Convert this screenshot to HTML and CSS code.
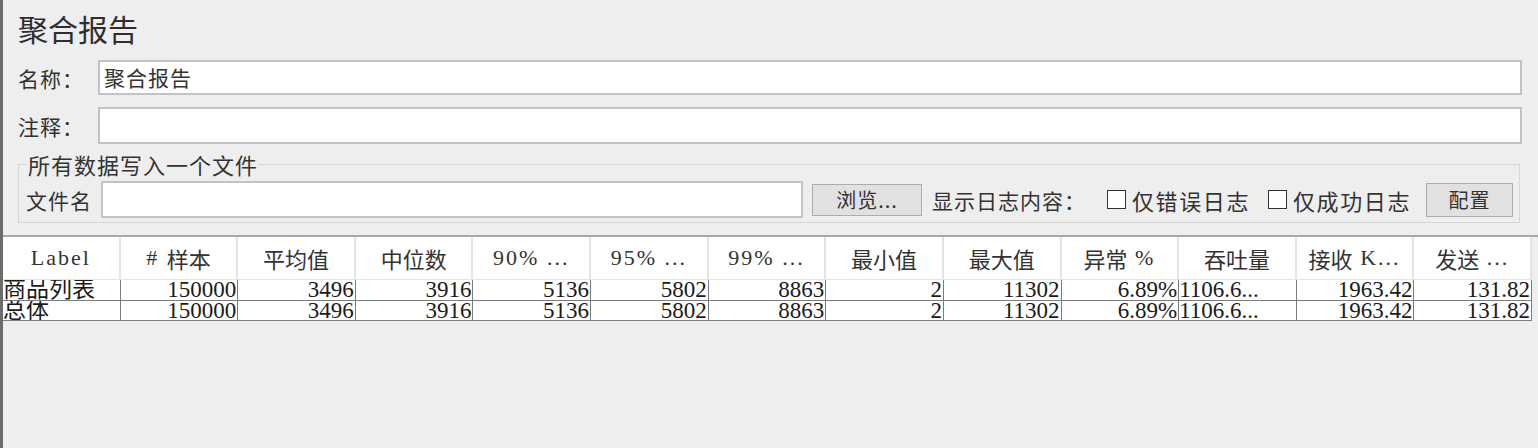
FILE: index.html
```html
<!DOCTYPE html>
<html lang="zh-CN">
<head>
<meta charset="utf-8">
<title>聚合报告</title>
<link rel="stylesheet" href="styles.css">
</head>
<body>
<div class="page">
  <div class="panel">
    <div class="title">聚合报告</div>
    <div class="field-row name-row">
      <span class="lbl">名称：</span>
      <div class="input">聚合报告</div>
    </div>
    <div class="field-row comment-row">
      <span class="lbl">注释：</span>
      <div class="input"></div>
    </div>
    <fieldset class="group">
      <legend>所有数据写入一个文件</legend>
      <div class="file-row">
        <span class="file-lbl">文件名</span>
        <div class="input file-input"></div>
        <button class="btn browse">浏览...</button>
        <span class="log-lbl">显示日志内容：</span>
        <span class="chk"><span class="box"></span>仅错误日志</span>
        <span class="chk"><span class="box"></span>仅成功日志</span>
        <button class="btn cfg">配置</button>
      </div>
    </fieldset>
  </div>
  <div class="divider"></div>
  <div class="table">
    <div class="th">Label</div>
    <div class="th"># <span class="cj">样本</span></div>
    <div class="th"><span class="cj">平均值</span></div>
    <div class="th"><span class="cj">中位数</span></div>
    <div class="th">90% ...</div>
    <div class="th">95% ...</div>
    <div class="th">99% ...</div>
    <div class="th"><span class="cj">最小值</span></div>
    <div class="th"><span class="cj">最大值</span></div>
    <div class="th"><span class="cj">异常</span> %</div>
    <div class="th"><span class="cj">吞吐量</span></div>
    <div class="th"><span class="cj">接收</span> K...</div>
    <div class="th"><span class="cj">发送</span> ...</div>

    <div class="td l">商品列表</div>
    <div class="td">150000</div>
    <div class="td">3496</div>
    <div class="td">3916</div>
    <div class="td">5136</div>
    <div class="td">5802</div>
    <div class="td">8863</div>
    <div class="td">2</div>
    <div class="td">11302</div>
    <div class="td">6.89%</div>
    <div class="td l">1106.6...</div>
    <div class="td">1963.42</div>
    <div class="td">131.82</div>

    <div class="td l">总体</div>
    <div class="td">150000</div>
    <div class="td">3496</div>
    <div class="td">3916</div>
    <div class="td">5136</div>
    <div class="td">5802</div>
    <div class="td">8863</div>
    <div class="td">2</div>
    <div class="td">11302</div>
    <div class="td">6.89%</div>
    <div class="td l">1106.6...</div>
    <div class="td">1963.42</div>
    <div class="td">131.82</div>
  </div>
</div>
</body>
</html>
```
FILE: styles.css
```css
html, body {
  margin: 0;
  padding: 0;
  background: #eeeeee;
}
body {
  width: 1538px;
  height: 448px;
  overflow: hidden;
  font-family: "Noto Sans CJK SC", "Noto Sans", sans-serif;
  color: #333333;
}
.page {
  border-left: 3px solid #6c6c6c;
  height: 448px;
  box-sizing: border-box;
}
.panel {
  padding: 8px 16px 0 15px;
}
.title {
  font-size: 30px;
  line-height: 40px;
  height: 40px;
  color: #2e2e2e;
}
.field-row {
  display: flex;
  align-items: center;
}
.name-row {
  margin-top: 12px;
  height: 35px;
}
.comment-row {
  margin-top: 12px;
  height: 37px;
}
.lbl {
  width: 80px;
  font-size: 21px;
  line-height: 30px;
  letter-spacing: 1px;
}
.input {
  flex: 1;
  height: 100%;
  box-sizing: border-box;
  background: #ffffff;
  border: 2px solid #c2c2c9;
  font-size: 21px;
  line-height: 30px;
  padding-left: 4px;
  letter-spacing: 1px;
  color: #333;
}
.group {
  margin: 8px 2px 0 0;
  padding: 0 6px 4px 7px;
  border: 1px solid #d6d6d6;
  height: 71px;
  box-sizing: border-box;
  min-width: 0;
}
.group legend {
  font-size: 22px;
  line-height: 24px;
  letter-spacing: 1px;
  padding: 0 1px;
  margin-left: 1px;
  color: #333;
}
.file-row {
  display: flex;
  align-items: center;
  height: 37px;
  margin-top: 5px;
  font-size: 21px;
  letter-spacing: 1px;
}
.file-lbl {
  width: 75px;
  line-height: 30px;
}
.file-input {
  flex: none;
  width: 702px;
  height: 37px;
}
.btn {
  font-family: "Noto Sans CJK SC", sans-serif;
  font-size: 20px;
  color: #333;
  background: #e1e1e1;
  border: 1px solid #adadad;
  padding: 0;
  height: 32px;
  line-height: 28px;
  letter-spacing: 1px;
}
.browse {
  width: 110px;
  margin-left: 9px;
}
.log-lbl {
  margin-left: 10px;
  width: 175px;
  line-height: 30px;
}
.chk {
  display: flex;
  align-items: center;
  line-height: 30px;
  font-size: 22px;
  letter-spacing: 1.6px;
}
.chk + .chk {
  margin-left: 18px;
}
.box {
  width: 19px;
  height: 19px;
  box-sizing: border-box;
  border: 1px solid #333;
  background: #ffffff;
  margin-right: 6px;
}
.cfg {
  width: 87px;
  height: 34px;
  margin-left: auto;
  margin-right: 0;
}
.divider {
  margin-top: 12px;
  height: 2px;
  background: #a8a8a8;
}
.table {
  width: 1529px;
  display: grid;
  grid-template-columns: repeat(13, 1fr);
  grid-template-rows: 43px 21px 20px;
  background: #ffffff;
  font-family: "Liberation Serif", "Noto Sans CJK SC", serif;
  color: #1a1a1a;
}
.th {
  border-right: 2px solid #e4e4e4;
  border-bottom: 1px solid #e4e4e4;
  display: flex;
  align-items: center;
  justify-content: center;
  font-size: 22px;
  letter-spacing: 2px;
  color: #333;
  white-space: pre;
  overflow: hidden;
}
.th .cj {
  font-family: "Noto Sans CJK SC", sans-serif;
  letter-spacing: 0;
}
.td {
  border-right: 1px solid #7c7c7c;
  border-bottom: 1px solid #7c7c7c;
  font-size: 23px;
  line-height: 20px;
  text-align: right;
  padding-right: 1px;
  overflow: hidden;
  white-space: nowrap;
}
.td.l {
  text-align: left;
  padding: 0;
}
```
